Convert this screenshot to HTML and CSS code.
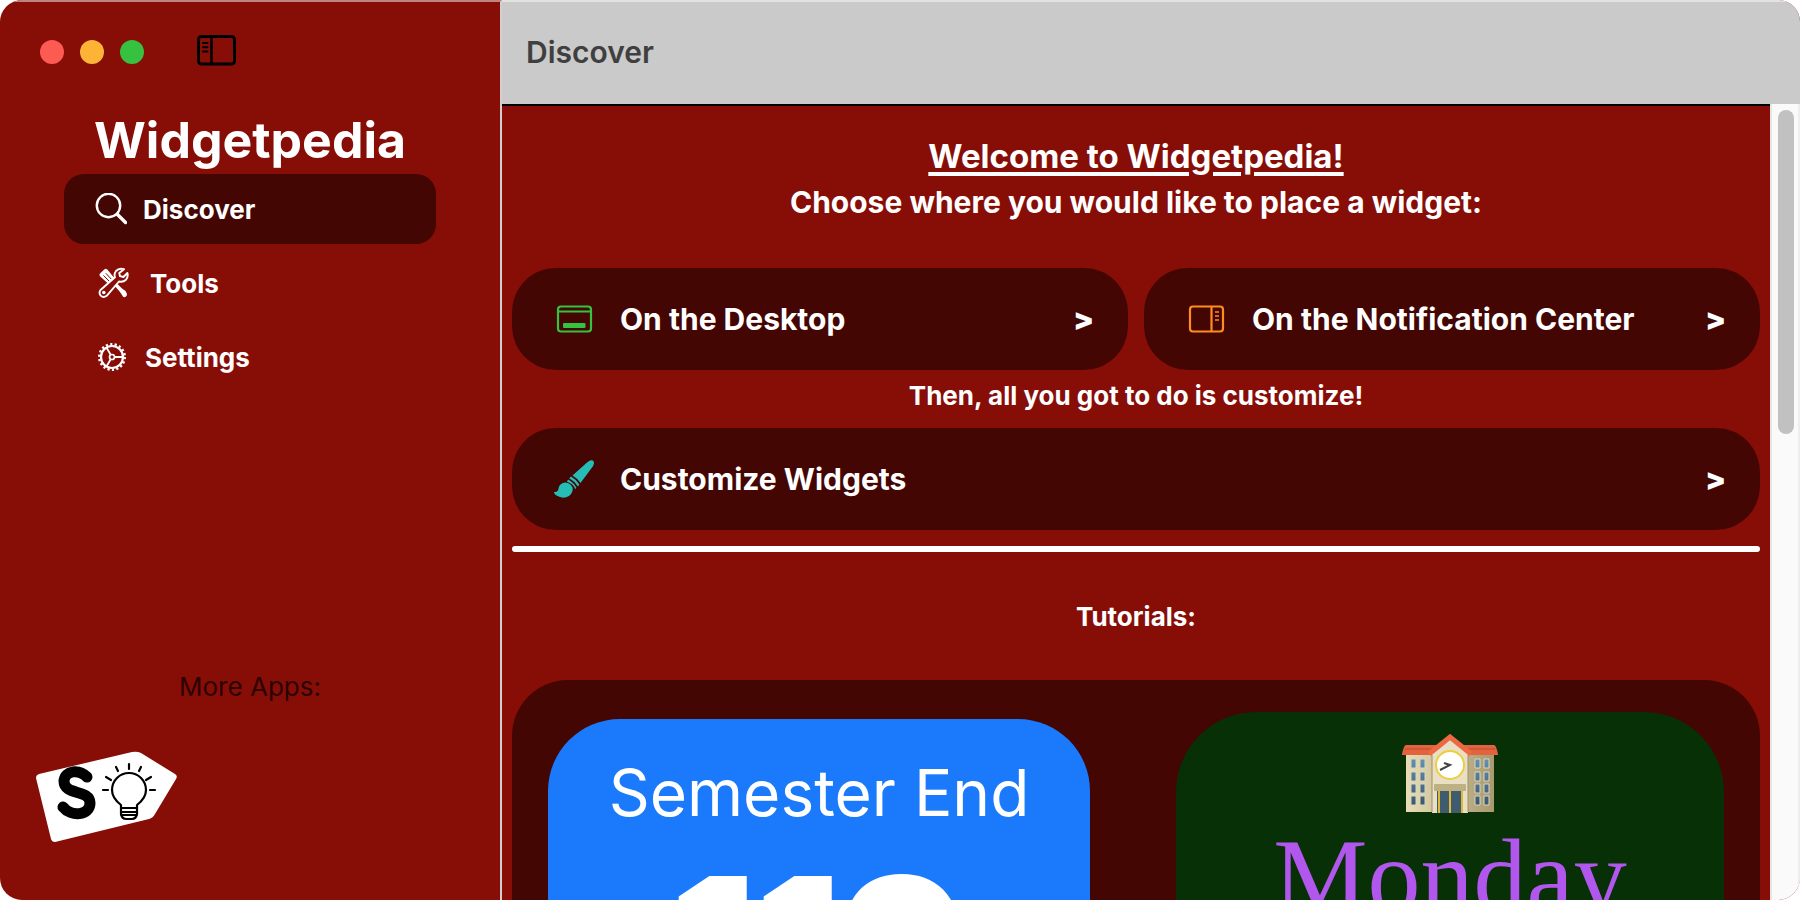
FILE: index.html
```html
<!DOCTYPE html>
<html lang="en">
<head>
  <meta charset="UTF-8" />
  <meta name="viewport" content="width=device-width, initial-scale=1.0"/>
  <title>Widgetpedia</title>
  <link rel="stylesheet" href="styles.css">
</head>
<body>

  <div class="window">
    <aside class="sidebar">
      <div class="titlebar">
        <button class="light close" aria-label="Close"></button>
        <button class="light minimize" aria-label="Minimize"></button>
        <button class="light zoom" aria-label="Zoom"></button>
        <button class="toggle" aria-label="Toggle sidebar">
          <svg width="40" height="34" viewBox="0 0 40 34" fill="none" stroke="#000">
            <rect x="1.5" y="1.5" width="36" height="27.5" rx="3" stroke-width="3"/>
            <path d="M14.5 2v27" stroke-width="2.6"/>
            <path d="M6 8h4.500M6 12.300h4.500M6 16.600h4.500" stroke-width="2" stroke-linecap="round"/>
          </svg>
        </button>
      </div>

      <h1 class="brand">Widgetpedia</h1>

      <nav class="menu">
        <a class="menu-item selected" href="#discover">
          <svg width="32" height="32" viewBox="0 0 32 32" fill="none" stroke="#fff" stroke-linecap="round">
            <circle cx="13.500" cy="12.500" r="11.700" stroke-width="2.400"/>
            <path d="M22.500 21.500l8 8" stroke-width="3.400"/>
          </svg>
          Discover
        </a>
        <a class="menu-item" href="#tools">
          <svg width="39" height="32" viewBox="0 0 39 32">
            <path d="M5 6.500l4.500-4.300q1.400-1 2.800.3l7 8.500-5.800 6-8.300-7.500q-1.500-1.500-.2-3z" fill="#fff"/>
            <path d="M8.500 8.500l6 6M10.800 6.300l5.500 5.800" stroke="#870e07" stroke-width="1"/>
            <path d="M18.500 17.500l2.200-2.200 6.300 6.200q3.500 1.500 5 5.500.2 1.800-1.300 2.800-1.600.8-2.800-.2-1.800-3.300-3.500-5.400z" fill="#fff"/>
            <path d="M29 2.200q-5-1.500-8 1.800-2.300 3-1 6.300L5.500 23q-2 3 .2 5.600 2.700 2.500 6 .2L24 14.500q4 1 7-1.800 2.500-2.700 1.400-6.700l-4 4-3.400-.8-.7-3.200z" fill="#870e07" stroke="#fff" stroke-width="1.900" stroke-linejoin="round"/>
            <circle cx="8.800" cy="25.500" r="1.800" fill="#fff"/>
          </svg>
          Tools
        </a>
        <a class="menu-item" href="#settings">
          <svg width="34" height="32" viewBox="0 0 34 32" fill="none" stroke="#fff">
            <circle cx="17" cy="16" r="12.800" stroke-width="2.400" stroke-dasharray="2.200 2.268"/>
            <circle cx="17" cy="16" r="11" stroke-width="2.200"/>
            <circle cx="17" cy="16" r="2.500" stroke-width="1.700"/>
            <path d="M19.500 16h8.500M15.700 13.800l-4.400-7.500M15.700 18.200l-4.400 7.500" stroke-width="1.800"/>
          </svg>
          Settings
        </a>
      </nav>

      <div class="more-apps">
        <p class="more-title">More Apps:</p>
        <a class="app-logo" href="#more" aria-label="School Assistant">
          <svg width="144" height="96" viewBox="1 0 144 96">
            <path d="M4 24L97 2q5-1 9 1l34 21q3 2 1 5l-21 35q-2 4-6 5L20 92q-3 0-4-3L1 28q0-3 3-4z" fill="#fff"/>
            <path d="M52 27C44 19 30 20 29 31c0 15 26 8 26 22 0 13-19 14-27 4" fill="none" stroke="#000" stroke-width="11" stroke-linecap="round"/>
            <g fill="none" stroke="#000" stroke-width="2.200" stroke-linecap="round" stroke-linejoin="round">
              <path d="M86 58v-3q-9-7-9-15a17 17 0 0 1 34 0q0 8-9 15v3z"/>
              <path d="M86 58v6q1 5 5 5h6q4 0 5-5v-6M86 62h16M86 65h16"/>
              <path d="M94 14v5M81 17l2 4M106 17l-2 4M71 27l5 3M116 27l-5 3M68 40h5M115 40h5"/>
            </g>
          </svg>
        </a>
      </div>
    </aside>

    <main class="main">
      <header class="header">
        <h2>Discover</h2>
      </header>

      <div class="body">
        <div class="content">
          <h2 class="welcome">Welcome to Widgetpedia!</h2>
          <p class="choose">Choose where you would like to place a widget:</p>

          <div class="row">
            <button class="card">
              <svg width="40" height="40" viewBox="0 0 40 40" fill="none" stroke="#34c240" stroke-width="2.200">
                <rect x="4" y="7.500" width="33" height="25" rx="3"/>
                <path d="M4 12.500h33"/>
                <rect x="9" y="24" width="22.500" height="5" rx="1" fill="#34c240" stroke="none"/>
              </svg>
              <span>On the Desktop</span>
              <span class="arrow">&gt;</span>
            </button>
            <button class="card">
              <svg width="40" height="40" viewBox="0 0 40 40" fill="none" stroke="#fd8d1c" stroke-width="2.200">
                <rect x="4" y="7.500" width="33" height="25" rx="3"/>
                <path d="M25.500 8v24"/>
                <path d="M29 13h4M29 17h4M29 21h4" stroke-width="1.500"/>
              </svg>
              <span>On the Notification Center</span>
              <span class="arrow">&gt;</span>
            </button>
          </div>

          <p class="note">Then, all you got to do is customize!</p>

          <button class="card">
            <svg width="40" height="40" viewBox="0 0 40 40" fill="#27bdb7">
              <path d="M36 1.500q4-1.200 4 3-.5 2-2 4L26.500 24q-3.500-5-8-7.500L33 3.500z"/>
              <path d="M17 17.500q5.500 3 8.300 8l-1.300 2q-3.500-5.500-8.800-8.300z"/>
              <path d="M14 20.500q6 3 8.500 8.500l-1.500 1q-1.500-5.500-8-7.300z"/>
              <path d="M11.500 23.500q5 .5 7 5 1 5-3.500 8.500-6 3.500-12.500-.5-2.500-1.500-2.500-3.500 4 .5 4.500-3.500 1-5.500 7-6z"/>
            </svg>
            <span>Customize Widgets</span>
            <span class="arrow">&gt;</span>
          </button>

          <hr class="divider">

          <h3 class="tutorials-title">Tutorials:</h3>

          <div class="tutorials">
            <div class="widget countdown">
              <span class="event">Semester End</span>
              <span class="days">119</span>
            </div>
            <div class="widget weekday">
              <svg width="96" height="80" viewBox="0 0 96 80">
                <defs>
                  <linearGradient id="wall" x1="0" x2="1">
                    <stop offset="0" stop-color="#e8ddb5"/>
                    <stop offset="1" stop-color="#a8996f"/>
                  </linearGradient>
                  <linearGradient id="glass" x1="0" y1="0" x2="0" y2="1">
                    <stop offset="0" stop-color="#6590ac"/>
                    <stop offset="1" stop-color="#3d566a"/>
                  </linearGradient>
                </defs>
                <path d="M4 20h88v58H4z" fill="url(#wall)"/>
                <path d="M4 11h88q2 0 4 9v1H0v-1q2-9 4-9z" fill="#e4633f"/>
                <path d="M3 15h90" stroke="#b94a30" stroke-width="1"/>
                <path d="M30 19L48 4l18 15v60H30z" fill="#e9dfc5"/>
                <path d="M30 21v57M66 21v57" stroke="#9c8e6a" stroke-width="1"/>
                <path d="M27 20L48 3l21 17" fill="none" stroke="#ee6843" stroke-width="5"/>
                <path d="M9 25h5v9H9zM18 25h5v9h-5zM9 38h5v9H9zM18 38h5v9h-5zM9 50h5v9H9zM18 50h5v9h-5zM9 62h5v9H9zM18 62h5v9h-5zM73 25h5v9h-5zM82 25h5v9h-5zM73 38h5v9h-5zM82 38h5v9h-5zM73 50h5v9h-5zM82 50h5v9h-5zM73 62h5v9h-5zM82 62h5v9h-5z" fill="url(#glass)" stroke="#d6d6c4" stroke-width="1"/>
                <circle cx="48" cy="31" r="14" fill="#fff" stroke="#ecce3e" stroke-width="2"/>
                <path d="M38 36l10-5-6-2" fill="none" stroke="#444" stroke-width="2"/>
                <path d="M35 57h26v22H35z" fill="#3f5b70"/>
                <path d="M37 57v22M48 57v22M60 57v22" stroke="#e0b934" stroke-width="2"/>
                <rect x="32" y="50" width="32" height="7" rx="1" fill="#bdb083"/>
              </svg>
              <span class="day">Monday</span>
            </div>
          </div>
        </div>

        <div class="scrollbar"><div class="thumb"></div></div>
      </div>
    </main>
  </div>

</body>
</html>
```

FILE: styles.css
```css
* {
  box-sizing: border-box;
}

body {
  font-family: Inter, "Liberation Sans", sans-serif;
  background: #fff;
  color: #fff;
  margin: 0;
}

h1, h2, h3, p {
  margin: 0;
}

button {
  font-family: inherit;
  color: inherit;
  border: none;
  padding: 0;
  cursor: pointer;
}

a {
  color: inherit;
  text-decoration: none;
}

svg {
  display: block;
  flex-shrink: 0;
}

.window {
  display: flex;
  height: 100vh;
  border-radius: 22px;
  overflow: hidden;
  background: #870e07;
}

/* Sidebar */

.sidebar {
  width: 502px;
  flex-shrink: 0;
  display: flex;
  flex-direction: column;
  border-top: 2px solid #c08580;
  border-right: 2px solid #d2cfce;
}

.titlebar {
  display: flex;
  align-items: center;
  gap: 16px;
  height: 100px;
  padding-left: 40px;
}

.light {
  width: 24px;
  height: 24px;
  border-radius: 50%;
}

.close {
  background: #fc5b51;
}

.minimize {
  background: #fdb436;
}

.zoom {
  background: #36c140;
}

.toggle {
  background: none;
  margin-left: 37px;
}

.brand {
  padding-top: 4px;
  font-size: 50px;
  line-height: 68px;
  text-align: center;
}

.menu {
  display: flex;
  flex-direction: column;
  gap: 4px;
  padding: 0 64px;
}

.menu-item {
  display: flex;
  align-items: center;
  gap: 16px;
  height: 70px;
  padding-left: 31px;
  border-radius: 20px;
  font-size: 26px;
  font-weight: bold;
}

.menu-item.selected {
  background: #440603;
}

.more-apps {
  margin-top: auto;
  padding: 0 36px 54px;
}

.more-title {
  font-size: 26px;
  line-height: 32px;
  text-align: center;
  color: #2c0301;
  margin-bottom: 47px;
}

.app-logo {
  display: inline-block;
  vertical-align: top;
}

/* Main area */

.main {
  flex: 1;
  min-width: 0;
  display: flex;
  flex-direction: column;
}

.header {
  height: 104px;
  flex-shrink: 0;
  display: flex;
  align-items: center;
  padding: 0 24px 2px;
  background: #cacaca;
  border-top: 2px solid #e2e2e2;
  color: #3f3f3f;
}

.header h2 {
  font-size: 30px;
  font-weight: 600;
}

.body {
  flex: 1;
  min-height: 0;
  display: flex;
}

.content {
  flex: 1;
  padding: 30px 10px 0;
  border-top: 2px solid #000;
  overflow: hidden;
}

.welcome {
  font-size: 33px;
  line-height: 40px;
  text-align: center;
  text-decoration: underline;
  text-decoration-thickness: 4px;
  text-underline-offset: 4px;
}

.choose {
  margin: 6px 0 46px;
  font-size: 30px;
  line-height: 40px;
  font-weight: bold;
  text-align: center;
}

.row {
  display: grid;
  grid-template-columns: 1fr 1fr;
  gap: 16px;
}

.card {
  display: flex;
  align-items: center;
  gap: 26px;
  width: 100%;
  height: 102px;
  padding: 0 34px 0 42px;
  border-radius: 44px;
  background: #440603;
  font-size: 30px;
  font-weight: bold;
}

.arrow {
  margin-left: auto;
  font-weight: 900;
}

.note {
  margin: 10px 0 16px;
  font-size: 26px;
  line-height: 32px;
  font-weight: bold;
  text-align: center;
}

.divider {
  height: 6px;
  margin: 16px 0 49px;
  border: none;
  border-radius: 3px;
  background: #fff;
}

.tutorials-title {
  margin-bottom: 47px;
  font-size: 26px;
  line-height: 32px;
  text-align: center;
}

.tutorials {
  display: flex;
  justify-content: space-between;
  align-items: flex-start;
  padding: 32px 36px;
  border-radius: 56px;
  background: #440603;
}

.widget {
  display: flex;
  flex-direction: column;
  align-items: center;
  width: 548px;
  height: 548px;
  border-radius: 80px;
}

.countdown {
  width: 542px;
  height: 542px;
  margin-top: 7px;
  padding-top: 34px;
  border-radius: 72px;
  background: #1b7afb;
}

.event {
  font-size: 64px;
  line-height: 80px;
}

.days {
  margin-top: 32px;
  font-size: 188px;
  line-height: 160px;
  font-weight: 900;
}

.weekday {
  padding-top: 22px;
  background: #083006;
}

.day {
  margin-top: 10px;
  font-family: "Liberation Serif", serif;
  font-size: 106px;
  line-height: 106px;
  color: #b257ee;
}

/* Scrollbar */

.scrollbar {
  width: 30px;
  padding: 6px 4px 0 6px;
  background: #fafafa;
  border-left: 2px solid #e6e6e6;
  border-right: 2px solid #eeeeee;
}

.thumb {
  width: 16px;
  height: 41%;
  border-radius: 8px;
  background: #c1c1c1;
}
```
